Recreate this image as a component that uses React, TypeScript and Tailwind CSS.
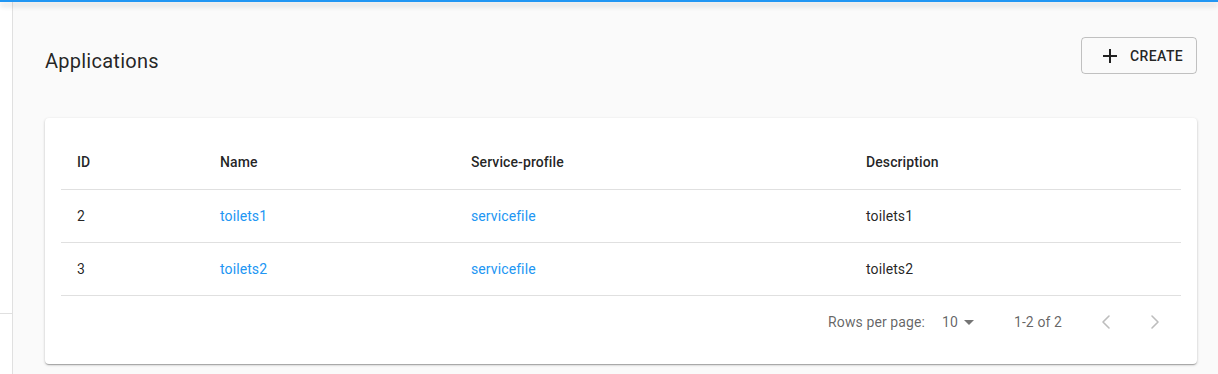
import { ChevronLeft, ChevronRight } from "lucide-react";

const rows = [
  { id: 2, name: "toilets1", profile: "servicefile", description: "toilets1" },
  { id: 3, name: "toilets2", profile: "servicefile", description: "toilets2" },
];

const AddIcon = () => (
  <svg viewBox="0 0 24 24" className="w-6 h-6" fill="currentColor">
    <path d="M19 13h-6v6h-2v-6H5v-2h6V5h2v6h6v2z" />
  </svg>
);

const App = () => {
  return (
    <div className="h-[374px] flex flex-col bg-[#fafafa] overflow-hidden font-['Roboto',sans-serif] text-[rgba(0,0,0,0.87)]">
      {/* APP BAR EDGE */}
      <div className="relative z-10 h-[2px] bg-[#2196f3] shadow-[0_2px_4px_-1px_rgba(0,0,0,0.2),0_4px_5px_0_rgba(0,0,0,0.14),0_1px_10px_0_rgba(0,0,0,0.12)]" />
      <div className="flex flex-1">
        {/* SIDEBAR */}
        <div className="w-[13px] bg-white border-r border-[#e0e0e0]">
          <div className="h-[312px] border-b border-[#e0e0e0]" />
        </div>
        {/* CONTENT */}
        <div className="flex-1 pl-[32px] pr-[21px]">
          <div className="flex items-start justify-between pt-[35px]">
            <h1 className="mt-[10px] text-[20px] leading-[28px] font-normal tracking-[0.25px]">Applications</h1>
            <button className="h-[37px] w-[116px] flex items-center pl-[16px] border border-[rgba(0,0,0,0.23)] rounded text-sm font-medium tracking-[0.4px] uppercase">
              <AddIcon />
              <span className="ml-2">Create</span>
            </button>
          </div>

          <div className="mt-[43px] bg-white rounded p-4 shadow-[0_1px_3px_rgba(0,0,0,0.2),0_1px_1px_rgba(0,0,0,0.14),0_2px_1px_-1px_rgba(0,0,0,0.12)]">
            <div className="grid grid-cols-[143px_251px_395px_1fr] h-[56px] items-center border-b border-[#e0e0e0] text-sm font-medium tracking-[0.1px]">
              <div className="pl-4">ID</div>
              <div className="pl-4">Name</div>
              <div className="pl-4">Service-profile</div>
              <div className="pl-4">Description</div>
            </div>
            {rows.map((row) => (
              <div
                key={row.id}
                className="grid grid-cols-[143px_251px_395px_1fr] h-[53px] items-center border-b border-[#e0e0e0] text-sm tracking-[0.1px]"
              >
                <div className="pl-4">{row.id}</div>
                <div className="pl-4 text-[#2196f3]">{row.name}</div>
                <div className="pl-4 text-[#2196f3]">{row.profile}</div>
                <div className="pl-4">{row.description}</div>
              </div>
            ))}
            {/* PAGINATION */}
            <div className="h-[52px] flex items-center justify-end pr-[14px] text-sm tracking-[0.1px] text-[rgba(0,0,0,0.62)]">
              <span>Rows per page:</span>
              <div className="ml-[17px] flex items-center">
                <span>10</span>
                <svg viewBox="0 0 24 24" className="w-6 h-6 -ml-[1px]" fill="#757575">
                  <path d="M7 10l5 5 5-5z" />
                </svg>
              </div>
              <span className="ml-[33px]">1-2 of 2</span>
              <ChevronLeft className="ml-[32px] w-6 h-6 text-[#bdbdbd]" strokeWidth={1.6} />
              <ChevronRight className="ml-[25px] w-6 h-6 text-[#bdbdbd]" strokeWidth={1.6} />
            </div>
          </div>
        </div>
      </div>
    </div>
  );
};

export default App;
